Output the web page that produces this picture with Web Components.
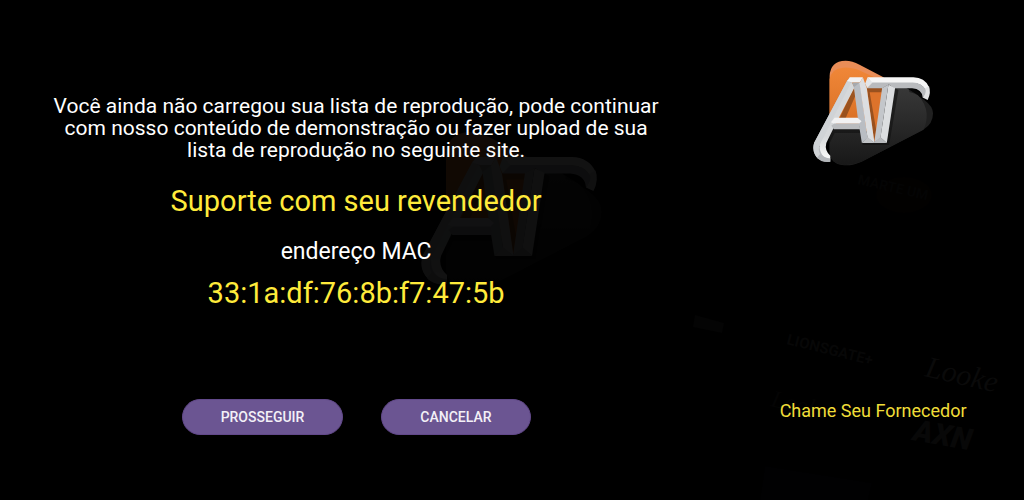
<!DOCTYPE html>
<html lang="pt-BR">
<head>
<meta charset="utf-8">
<meta name="viewport" content="width=device-width, initial-scale=1">
<title>Lista de reprodução</title>
<style>
  body {
    margin: 0;
    background: #000;
    color: #fff;
    font-family: Roboto, "Liberation Sans", sans-serif;
  }
</style>
</head>
<body>
<playlist-screen>
  <playlist-notice
    link="Suporte com seu revendedor"
    mac="33:1a:df:76:8b:f7:47:5b">
    Você ainda não carregou sua lista de reprodução, pode continuar com nosso conteúdo de demonstração ou fazer upload de sua lista de reprodução no seguinte site.
    <pill-button slot="actions">PROSSEGUIR</pill-button>
    <pill-button slot="actions">CANCELAR</pill-button>
  </playlist-notice>
  <provider-panel slot="side">Chame Seu Fornecedor</provider-panel>
</playlist-screen>

<script>
function define(name, html, setup) {
  const template = document.createElement('template');
  template.innerHTML = html;
  customElements.define(name, class extends HTMLElement {
    connectedCallback() {
      if (this.shadowRoot) return;
      const shadow = this.attachShadow({ mode: 'open' });
      shadow.append(template.content.cloneNode(true));
      if (setup) setup(this, shadow);
    }
  });
}

define('at-logo', `
  <style>
    :host { display: block; }
    svg { display: block; width: 100%; height: auto; }
  </style>
  <svg viewBox="40 30 364 320" aria-hidden="true" focusable="false">
    <defs>
      <linearGradient id="orange" x1="0" y1="0" x2="0" y2="1">
        <stop offset="0" stop-color="#f08738"/>
        <stop offset="1" stop-color="#d2691f"/>
      </linearGradient>
      <linearGradient id="dark" x1="0" y1="0" x2="0" y2="1">
        <stop offset="0" stop-color="#383838"/>
        <stop offset="1" stop-color="#181818"/>
      </linearGradient>
      <linearGradient id="hook" x1="0" y1="0" x2="0" y2="1">
        <stop offset=".7" stop-color="#d6d8da"/>
        <stop offset="1" stop-color="#fafafa"/>
      </linearGradient>
    </defs>
    <!-- Play triangle: orange half, then dark half -->
    <path fill="#e98d57" d="M90 200V78Q92 33 138 32Q158 32 180 44L252 82L240 240H90Z"/>
    <path fill="url(#orange)" d="M90 200V88Q96 55 130 53Q150 51 172 58L225 82H252L230 272L180 228H90Z"/>
    <path fill="#202020" d="M322 115L375 150Q402 170 401 192Q401 222 372 240L186 336Q155 350 128 346Q92 340 90 308V228H185L232 280L285 112Z"/>
    <path fill="url(#dark)" d="M322 115L356 136Q379 160 382 192Q383 220 372 240L186 336Q155 348 128 345Q92 340 90 308V228H185L232 280L285 112Z"/>
    <path fill="#dd732b" d="M203 112H250L226 275H222Z"/>
    <!-- Shadows cast by the letters -->
    <path fill="#6d3a18" opacity=".6" d="M163 113L168 136L138 205H120ZM200 100L209 118L230 240L224 274ZM204 114H250L247 127H208Z"/>
    <path fill="#0c0c0c" opacity=".5" d="M103 236H184L186 250H105L88 284L80 270ZM286 114L297 121L269 286H190L188 278H261ZM328 114Q362 119 375 146L382 154Q360 133 330 126Z"/>
    <!-- A -->
    <path fill="#b9bcc0" d="M151 82L143 92L44 278Q36 300 48 318Q62 338 92 336V328L60 290L160 104Z"/>
    <path fill="#d0d3d6" d="M144 90L158 102L60 284Q52 308 68 322L56 328Q36 310 43 280Z"/>
    <path fill="url(#hook)" d="M155 98L165 112L100 238L80 280Q74 302 92 318V328Q58 322 60 284Z"/>
    <path fill="#b3b6ba" d="M92 326V336Q66 340 52 324L62 312Q74 326 92 326Z"/>
    <path fill="#f2f2f3" d="M151 82H190L181 98H158L143 93Z"/>
    <path fill="#a6a9ae" d="M158 98H181L178 110L164 116Z"/>
    <path fill="#b9bdc3" d="M163 112L181 98L204 264L187 280L175 205Z"/>
    <path fill="#dcdee1" d="M190 82L202 116L225 280L204 264L180 100Z"/>
    <path fill="#f2f2f3" d="M105 204H174L186 214L178 222H104L94 217Z"/>
    <path fill="#babcbf" d="M104 221H178L182 238H103L95 228Z"/>
    <path fill="#c0c2c5" d="M187 280L204 262L226 280Z"/>
    <!-- T -->
    <path fill="#f6f6f6" d="M204 82H342Q376 83 389 111L378 120Q367 99 340 99H217Z"/>
    <path fill="#e2e3e4" d="M376 116L389 109Q396 128 385 150L370 143Q378 131 376 116Z"/>
    <path fill="#b9bbbe" d="M217 98H340Q368 99 379 120Q380 132 370 143Q368 117 338 115H285L268 104L248 115H203Z"/>
    <path fill="#e4e6e8" d="M204 82L219 98L203 115L197 101Z"/>
    <path fill="#c3c6ca" d="M248 114L267 104L243 264L224 280Z"/>
    <path fill="#dcdee0" d="M267 104L287 114L262 280L243 263Z"/>
    <path fill="#b7b9bc" d="M222 280L243 262L262 280Z"/>
  </svg>
`);

define('dim-backdrop', `
  <style>
    :host { display: block; overflow: hidden; }
    .wall { display: block; width: 100%; height: 100%; }
    at-logo {
      position: absolute;
      left: 50%;
      top: 131px;
      width: 182px;
      transform: translateX(-50%);
      opacity: .07;
    }
  </style>
  <svg class="wall" viewBox="0 0 1024 500" preserveAspectRatio="xMaxYMid slice" aria-hidden="true" focusable="false">
    <ellipse cx="904" cy="195" rx="28" ry="18" fill="#020100"/>
    <path d="M765 466L872 483L868 500H760Z" fill="#010102"/>
    <path d="M695 315L724 323L722 333L693 327Z" fill="#040404"/>
    <g fill="#070707" font-family="Roboto, sans-serif" font-weight="700">
      <text font-size="15" transform="translate(786 344) rotate(14)">LIONSGATE+</text>
      <text font-size="14" transform="translate(857 184) rotate(13)" fill="#040404">MARTE UM</text>
      <text font-family="Liberation Serif, serif" font-style="italic" font-weight="400" font-size="30" transform="translate(924 376) rotate(13)" fill="#0a0a0a">Looke</text>
      <text font-family="Liberation Serif, serif" font-style="italic" font-weight="400" font-size="24" transform="translate(770 406) rotate(13)" fill="#040404">Looke</text>
      <text font-style="italic" font-weight="900" font-size="30" transform="translate(912 440) rotate(10)" fill="#080808">AXN</text>
    </g>
  </svg>
  <at-logo></at-logo>
`);

define('pill-button', `
  <style>
    :host { display: block; }
    button {
      display: block;
      border: 1px solid #62498a;
      border-radius: 18px;
      padding: 9px 38px;
      background: #6b5592;
      color: #f3f0f7;
      font: 500 14px/16px Roboto, "Liberation Sans", sans-serif;
      cursor: pointer;
    }
    button:hover, button:focus-visible { background: #7d66a6; }
  </style>
  <button type="button"><slot></slot></button>
`);

define('playlist-notice', `
  <style>
    :host { display: flex; flex-direction: column; align-items: center; text-align: center; }
    p { margin: 0; }
    .message { max-width: 616px; font-size: 21px; line-height: 22px; }
    .link { margin-top: 23px; color: #ffeb3b; font-size: 29px; line-height: 34px; }
    .label { margin-top: 20px; font-size: 23px; line-height: 28px; }
    .mac { margin-top: 10px; color: #ffeb3b; font-size: 29px; line-height: 34px; }
    .actions { display: flex; gap: 38px; margin-top: 89px; }
  </style>
  <p class="message"><slot></slot></p>
  <p class="link"></p>
  <p class="label">endereço MAC</p>
  <p class="mac"></p>
  <div class="actions"><slot name="actions"></slot></div>
`, (host, shadow) => {
  shadow.querySelector('.link').textContent = host.getAttribute('link');
  shadow.querySelector('.mac').textContent = host.getAttribute('mac');
});

define('provider-panel', `
  <style>
    :host { display: flex; flex-direction: column; align-items: center; justify-content: space-between; }
    at-logo { width: 121px; }
    p { margin: 0; color: #f0dd38; font-size: 18px; line-height: 20px; }
  </style>
  <at-logo></at-logo>
  <p><slot></slot></p>
`);

define('playlist-screen', `
  <style>
    :host { display: block; position: relative; min-height: 100vh; }
    dim-backdrop { position: absolute; inset: 0; }
    main {
      position: relative;
      display: grid;
      grid-template-columns: 7fr 3fr;
      column-gap: 14px;
      box-sizing: border-box;
      min-height: 100vh;
      padding: 60px 0 65px 4px;
    }
    .content { padding-top: 35px; }
    .side { display: flex; justify-content: center; padding-bottom: 14px; }
  </style>
  <dim-backdrop></dim-backdrop>
  <main>
    <div class="content"><slot></slot></div>
    <div class="side"><slot name="side"></slot></div>
  </main>
`);
</script>
</body>
</html>
